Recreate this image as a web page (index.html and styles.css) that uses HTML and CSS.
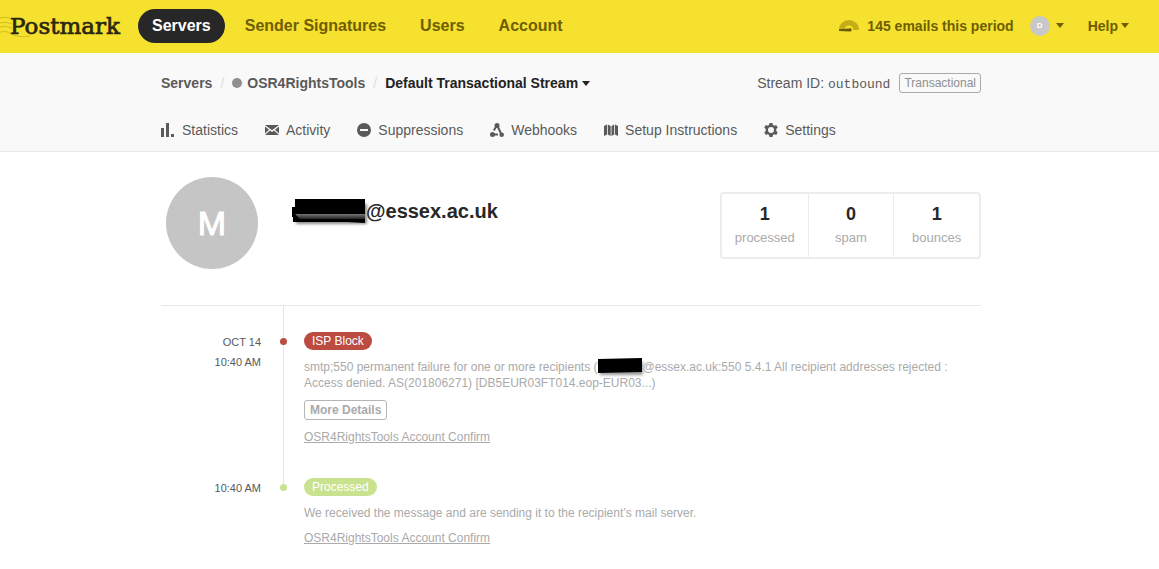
FILE: index.html
```html
<!DOCTYPE html>
<html lang="en">
<head>
<meta charset="utf-8">
<title>Postmark</title>
<link rel="stylesheet" href="styles.css">
</head>
<body>
<header class="topbar">
  <a class="logo" href="#">
    <svg class="logo-waves" width="32" height="24" viewBox="0 0 32 24" aria-hidden="true"><path d="M0 4q6-2 12 1M0 9q6-2 12 1M0 13q6-2 12 1M0 18q6-2 12 2t18 2"/></svg>
    <span class="logo-text">Postmark</span>
  </a>
  <nav class="mainnav">
    <a class="mainnav-link is-active" href="#">Servers</a>
    <a class="mainnav-link" href="#">Sender Signatures</a>
    <a class="mainnav-link" href="#">Users</a>
    <a class="mainnav-link" href="#">Account</a>
  </nav>
  <div class="account">
    <a class="usage" href="#">
      <svg width="20" height="12" viewBox="0 0 20 12" aria-hidden="true"><path d="M0 9.500a10 9.500 0 0 1 20 0V10h-5.500a4.500 4.500 0 0 0-9 0H0z" fill="#c3ad18"/><path d="M0 9.200l10-.7a1.700 1.700 0 1 1 .4 3L0 11z" fill="#6b5b00"/></svg>
      <span>145 emails this period</span>
    </a>
    <button class="menu-button user-menu" type="button" aria-label="User menu"><span class="user-avatar">D</span><span class="caret"></span></button>
    <button class="menu-button help-menu" type="button">Help<span class="caret"></span></button>
  </div>
</header>

<div class="subheader">
  <div class="container">
    <div class="stream-row">
      <nav class="crumbs" aria-label="Breadcrumb">
        <a class="crumb" href="#">Servers</a>
        <span class="slash">/</span>
        <a class="crumb" href="#"><span class="server-dot"></span>OSR4RightsTools</a>
        <span class="slash">/</span>
        <button class="stream-menu" type="button">Default Transactional Stream<span class="caret"></span></button>
      </nav>
      <div class="stream-id"><span>Stream ID: <code class="stream-code">outbound</code></span><span class="tag">Transactional</span></div>
    </div>
    <nav class="tabs">
      <a class="tab" href="#"><svg width="14" height="14" viewBox="0 0 14 14" aria-hidden="true"><path d="M0 5h3v9H0zM5 0h3v14H5zM10 11h3v3h-3z"/></svg>Statistics</a>
      <a class="tab" href="#"><svg width="14" height="14" viewBox="0 0 14 14" aria-hidden="true"><path d="M0 2h14L7 7.200zM0 3.400L4 6.700 0 10.400zM14 3.400v7L10 6.700zM0 12l5-4.500 2 1.500 2-1.500 5 4.500z"/></svg>Activity</a>
      <a class="tab" href="#"><svg width="14" height="14" viewBox="0 0 14 14" aria-hidden="true"><path fill-rule="evenodd" d="M7 0a7 7 0 1 1 0 14A7 7 0 0 1 7 0zM3 6v2h8V6z"/></svg>Suppressions</a>
      <a class="tab" href="#"><svg width="14" height="14" viewBox="0 0 14 14" aria-hidden="true"><circle cx="7" cy="2.500" r="2.500"/><circle cx="2.500" cy="11.500" r="2.500"/><circle cx="11.700" cy="11.700" r="2.300"/><path d="M6.500 3L3.800 7.500M7.500 3L11 10.500M2.500 11.500H8" fill="none" stroke="#5a5a5a" stroke-width="2"/></svg>Webhooks</a>
      <a class="tab" href="#"><svg width="14" height="14" viewBox="0 0 14 14" aria-hidden="true"><path d="M0 3l3-1.500v10L0 13zM3.800 1.500L6.700 3v10l-2.900-1.500zM7.500 3l2.700-1.500v10L7.500 13zM11 1.500L14 3v10l-3-1.500z"/></svg>Setup Instructions</a>
      <a class="tab" href="#"><svg width="14" height="14" viewBox="0 0 14 14" aria-hidden="true"><path fill-rule="evenodd" d="M5.500 0h3l.5 2 1.200.7 2-.6 1.500 2.500L12.300 6v2l1.400 1.400-1.500 2.500-2-.6L9 12l-.5 2h-3L5 12l-1.200-.7-2 .6L.3 9.400 1.700 8V6L.3 4.600l1.500-2.500 2 .6L5 2zM7 4a3 3 0 1 0 0 6 3 3 0 0 0 0-6z"/></svg>Settings</a>
    </nav>
  </div>
</div>

<main class="content">
  <div class="container">
    <section class="profile">
      <div class="avatar">M</div>
      <h1 class="email"><svg width="78" height="30" viewBox="0 0 78 30" aria-hidden="true">
        <defs>
          <linearGradient id="edge" x2="0" y2="1"><stop offset="0" stop-color="#777"/><stop offset="1" stop-color="#222"/></linearGradient>
          <filter id="soft" x="-20%" y="-50%" width="140%" height="200%"><feGaussianBlur stdDeviation="1.500"/></filter>
        </defs>
        <path d="M5 8h71v20H5z" fill="#000" opacity=".45" filter="url(#soft)"/>
        <path d="M1 11h3V3h70v24l-18-1H2v-5H1z" fill="#000"/>
        <path d="M4 18h70v5H9z" fill="url(#edge)"/>
      </svg>@essex.ac.uk</h1>
      <dl class="stats">
        <div class="stat"><dt>processed</dt><dd>1</dd></div>
        <div class="stat"><dt>spam</dt><dd>0</dd></div>
        <div class="stat"><dt>bounces</dt><dd>1</dd></div>
      </dl>
    </section>

    <ol class="timeline">
      <li class="event event-block">
        <time class="when">OCT 14<br>10:40 AM</time>
        <span class="rail"><span class="dot"></span></span>
        <div class="details">
          <span class="badge">ISP Block</span>
          <p class="message">smtp;550 permanent failure for one or more recipients (<svg class="mask" width="45" height="16" viewBox="0 0 45 16" aria-hidden="true"><path d="M3 3h43v13H3z" opacity=".4" filter="url(#soft)"/><path d="M1 0l44-1v14L1 14z"/></svg>@essex.ac.uk:550 5.4.1 All recipient addresses rejected : Access denied. AS(201806271) [DB5EUR03FT014.eop-EUR03...)</p>
          <button class="more" type="button">More Details</button>
          <a class="subject" href="#">OSR4RightsTools Account Confirm</a>
        </div>
      </li>
      <li class="event event-processed">
        <time class="when">10:40 AM</time>
        <span class="rail"><span class="dot"></span></span>
        <div class="details">
          <span class="badge">Processed</span>
          <p class="message">We received the message and are sending it to the recipient’s mail server.</p>
          <a class="subject" href="#">OSR4RightsTools Account Confirm</a>
        </div>
      </li>
    </ol>
  </div>
</main>
</body>
</html>
```
FILE: styles.css
```css
* { box-sizing: border-box; }

body {
  margin: 0;
  background: #fff;
  color: #5a5a5a;
  font: 14px/20px "Liberation Sans", Arial, sans-serif;
}

a { color: inherit; text-decoration: none; }
button { padding: 0; border: 0; background: none; color: inherit; font: inherit; cursor: pointer; }
svg { flex: none; }

.caret {
  display: inline-block;
  border: 4px solid transparent;
  border-top: 5px solid currentColor;
  border-bottom: 0;
}

/* Top bar */
.topbar {
  display: flex;
  align-items: center;
  height: 53px;
  padding: 0 30px 2px 0;
  background: #f6e12f;
  color: #6e5e00;
  font-weight: bold;
}
.logo { display: grid; align-items: center; width: 138px; }
.logo-waves, .logo-text { grid-area: 1 / 1; }
.logo-waves { fill: none; stroke: #d2bd22; }
.logo-text {
  padding-left: 10px;
  color: #2a270f;
  font: 23px/28px "DejaVu Serif", serif;
  -webkit-text-stroke: 0.7px #2a270f;
}
.mainnav { display: flex; gap: 6px; font-size: 16px; }
.mainnav-link { padding: 7px 14px; border-radius: 17px; }
.mainnav-link.is-active { background: #272727; color: #fff; }
.account { display: flex; align-items: center; margin-left: auto; }
.usage { display: flex; align-items: center; gap: 8px; }
.menu-button { display: flex; align-items: center; }
.user-menu { gap: 6px; margin-left: 16px; }
.user-avatar {
  width: 20px;
  border-radius: 50%;
  background: #c8c8c8;
  color: #fff;
  font-size: 8px;
}
.help-menu { gap: 3px; margin-left: 24px; }

/* Stream header */
.container { max-width: 820px; margin: 0 auto; }
.subheader, .content { padding-right: 17px; }
.subheader { border-bottom: 1px solid #e8e8e8; background: #f9f9f9; }
.stream-row { display: flex; justify-content: space-between; padding-top: 20px; }
.crumbs { display: flex; gap: 8px; font-weight: bold; }
.crumb { display: flex; align-items: center; gap: 5px; }
.slash { color: #ddd; font-weight: normal; }
.server-dot { width: 10px; height: 10px; border-radius: 50%; background: #8f8f8f; }
.stream-menu { display: flex; align-items: center; gap: 4px; color: #222; }
.stream-id { display: flex; align-items: center; gap: 9px; }
.stream-code { font: 13px "Liberation Mono", monospace; }
.tag {
  padding: 0 4px;
  border: 1px solid #aaa;
  border-radius: 3px;
  color: #8f8f8f;
  font-size: 12px;
  line-height: 18px;
}
.tabs { display: flex; gap: 27px; padding: 27px 0 11px; }
.tab { display: flex; align-items: center; gap: 7px; fill: #5a5a5a; }

/* Recipient */
.profile { display: flex; align-items: flex-start; padding: 25px 0 36px 5px; }
.avatar {
  width: 92px;
  border-radius: 50%;
  background: #c5c5c5;
  color: #fff;
  font-size: 34px;
  line-height: 92px;
  text-align: center;
  -webkit-text-stroke: 1px #fff;
}
.email {
  display: flex;
  align-items: center;
  margin: 22px 0 0 33px;
  color: #272727;
  font-size: 20px;
  line-height: 24px;
}
.email svg { margin: -3px -3px -3px 0; }
.stats {
  display: grid;
  grid-template-columns: repeat(3, 1fr);
  width: 261px;
  margin: 15px 0 0 auto;
  border: 2px solid #ececec;
  border-radius: 4px;
}
.stat { display: flex; flex-direction: column-reverse; gap: 5px; padding: 10px 0; text-align: center; }
.stat + .stat { border-left: 1px solid #ececec; }
.stat dt { color: #aaa; font-size: 13px; line-height: 18px; }
.stat dd { margin: 0; color: #272727; font-size: 18px; font-weight: bold; }

/* Timeline */
.timeline { margin: 0; padding: 0; border-top: 1px solid #e8e8e8; list-style: none; }
.event { display: grid; grid-template-columns: 119px 7px 1fr; }
.when { padding-right: 19px; font-size: 11px; text-align: right; }
.rail { display: flex; flex-direction: column; align-items: center; }
.rail::before { width: 1px; height: 6px; background: #e5e5e5; content: ""; }
.dot { width: 7px; height: 7px; border-radius: 50%; }
.details {
  display: flex;
  flex-direction: column;
  align-items: flex-start;
  gap: 9px;
  padding-left: 17px;
  color: #aaa;
  font-size: 12px;
  line-height: 16px;
}
.badge { padding: 0 8px; border-radius: 9px; color: #fff; line-height: 18px; }
.message { max-width: 660px; margin: 0; }
.mask { margin: -3px 0 -1px; vertical-align: middle; overflow: visible; fill: #000; }
.more { height: 20px; padding: 0 5px; border: 1px solid #b5b5b5; border-radius: 3px; font-weight: bold; }
.subject { text-decoration: underline; }

.event-block .when, .event-block .details { padding-top: 26px; }
.event-block .details { padding-bottom: 33px; }
.event-block .rail::before { height: 32px; }
.event-block .rail::after { flex: 1; width: 1px; background: #e5e5e5; content: ""; }
.event-block .badge, .event-block .dot { background: #bc4b42; }
.event-processed .badge, .event-processed .dot { background: #c9e28f; }
```
